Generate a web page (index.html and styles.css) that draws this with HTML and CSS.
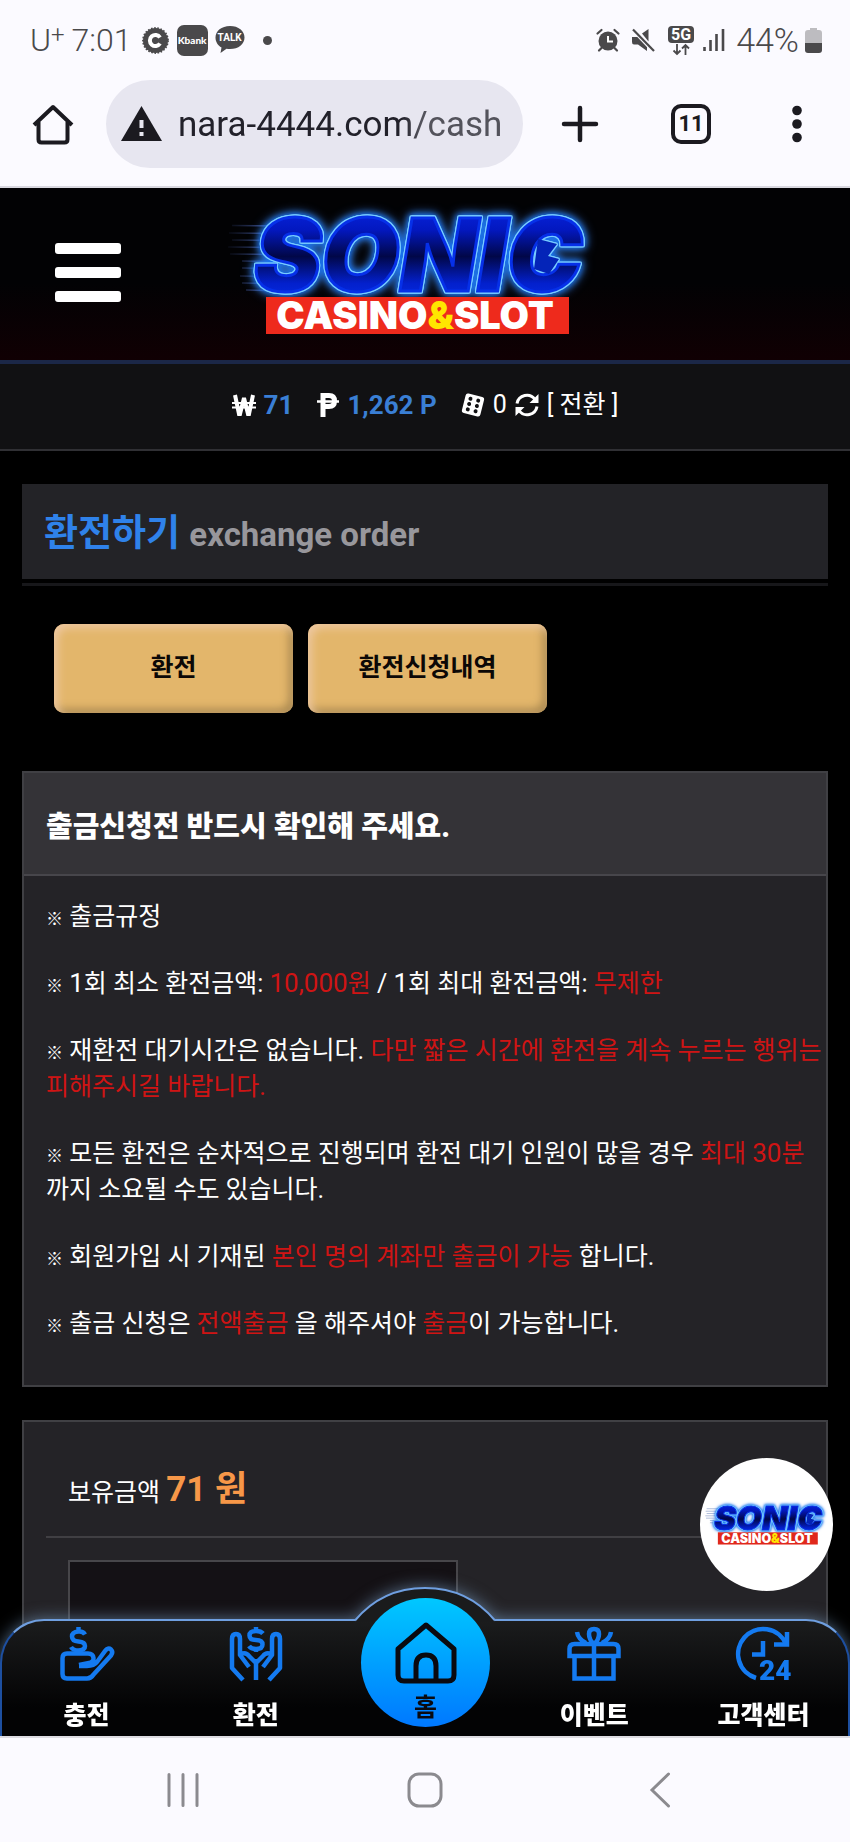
FILE: index.html
```html
<!DOCTYPE html>
<html lang="ko">
<head>
<meta charset="utf-8">
<meta name="viewport" content="width=device-width, initial-scale=1">
<title>환전하기</title>
<link rel="stylesheet" href="styles.css">
</head>
<body>
<svg class="defs" aria-hidden="true">
  <defs>
    <linearGradient id="neon" x1="0" y1="0" x2="0" y2="1">
      <stop offset="0" stop-color="#0a2cf0"/><stop offset=".3" stop-color="#0318c0"/><stop offset=".52" stop-color="#010748"/><stop offset=".74" stop-color="#0320cc"/><stop offset="1" stop-color="#0636f5"/>
    </linearGradient>
    <linearGradient id="speed" x1="0" x2="1"><stop offset="0" stop-color="#3a4c88" stop-opacity=".1"/><stop offset="1" stop-color="#5a78d8"/></linearGradient>
  </defs>
</svg>

<header class="phone-top">
  <div class="status">
    <div class="status-left">
      <span class="carrier">U<sup>+</sup></span>
      <span class="clock">7:01</span>
      <svg class="s-badge" viewBox="0 0 27 27"><circle cx="13.500" cy="13.500" r="12.500" fill="#4a494b"/><circle cx="13.500" cy="13.500" r="12.600" fill="none" stroke="#4a494b" stroke-width="1.600" stroke-dasharray="1.600 1.600"/><path d="M18 10.500A5.500 5.500 0 1 0 18 16.500" fill="none" stroke="#fff" stroke-width="4"/></svg>
      <span class="kbank">Kbank</span>
      <span class="talk"><svg viewBox="0 0 30 28"><path d="M15 0C6.500 0 .5 5 .5 11.500c0 4.500 2.500 8 6 10L5.500 27l6-4.200c1 .2 2.300.3 3.500.3 8.500 0 14.500-5 14.500-11.600S23.500 0 15 0z" fill="#4a494b"/></svg><b>TALK</b></span>
      <span class="dot"></span>
    </div>
    <div class="status-right">
      <svg class="s-alarm" viewBox="0 0 24 24"><g fill="none" stroke="#4a494b" stroke-width="2.200" stroke-linecap="round"><path d="M1.500 5.500L5.500 2M22.500 5.500L18.500 2M5.500 20l-2.500 2.500M18.500 20l2.500 2.500"/></g><circle cx="12" cy="13" r="9.500" fill="#4a494b"/><path d="M12 8v5.500h5" fill="none" stroke="#fff" stroke-width="2"/></svg>
      <svg class="s-mute" viewBox="0 0 24 24"><path d="M1 9h5l3-1.500 7 11V23l-9-6.500H3Q1 16.500 1 14zM11 5.500L17.500 1v12.500z" fill="#4a494b"/><path d="M2.500 2l20 21" stroke="#fbfaff" stroke-width="4"/><path d="M2 1.500l21 21.500" stroke="#4a494b" stroke-width="2.200"/></svg>
      <span class="net"><b>5G</b><svg viewBox="0 0 18 11"><path d="M5 0v10M1.500 6.500L5 10l3.500-3.500M13.500 11V1M10 4.500L13.500 1 17 4.500" fill="none" stroke="#4a494b" stroke-width="1.800"/></svg></span>
      <svg class="s-signal" viewBox="0 0 22 24"><path d="M1.500 19v4M7.500 12v11M13.500 6v17M20 1v22" stroke="#4a494b" stroke-width="2.600"/></svg>
      <span class="level">44%</span>
      <svg class="s-batt" viewBox="0 0 17 25"><path d="M5 0h7v2h2q3 0 3 3v11H0V5q0-3 3-3h2z" fill="#bdbcc0"/><path d="M0 15h17v7q0 3-3 3H3q-3 0-3-3z" fill="#4a494b"/></svg>
    </div>
  </div>
  <div class="browser">
    <button class="icon-btn" aria-label="홈페이지"><svg width="42" height="42" viewBox="0 0 42 42" fill="none" stroke="#1b1a20" stroke-width="4"><path d="M2 22L21 4l19 18M6.500 19v17.500q0 3 3 3h23q3 0 3-3V19" stroke-linejoin="round"/></svg></button>
    <div class="omnibox">
      <svg width="41" height="35" viewBox="0 0 41 35"><path d="M20.500 0L41 35H0z" fill="#1b1a20"/><path d="M20.500 14v8M20.500 26v4" stroke="#e7e6f0" stroke-width="4"/></svg>
      <input class="url" type="text" value="nara-4444.com/cash" aria-label="주소">
    </div>
    <button class="icon-btn" aria-label="새 탭"><svg width="36" height="36" viewBox="0 0 36 36"><path d="M18 2v32M2 18h32" stroke="#1b1a20" stroke-width="4.500" stroke-linecap="round"/></svg></button>
    <button class="tabs">11</button>
    <button class="icon-btn" aria-label="메뉴"><svg width="10" height="38" viewBox="0 0 10 38" fill="#1b1a20"><circle cx="5" cy="5.500" r="4.800"/><circle cx="5" cy="19" r="4.800"/><circle cx="5" cy="32.500" r="4.800"/></svg></button>
  </div>
</header>

<div class="site">
  <header class="brand">
    <button class="burger" aria-label="전체 메뉴"><i></i><i></i><i></i></button>
    <svg class="logo" viewBox="0 0 382 150" role="img" aria-label="SONIC CASINO&amp;SLOT">
      <path stroke="url(#speed)" stroke-width="1.500" d="M8 26.500L60 27M5 34L60 34.500M8 41L55 41.500M4 48L55 48.500M6 55L55 55.500M18 62L55 62.500M18 69L50 69.500M16 77L40 77.500M18 84L50 84.500M22 91L50 91.500"/>
      <g class="glow">
        <text class="sonic" x="30" y="92">SONIC</text>
        <path d="M314 40L333 45 324 57 335 60 325 75 310 70z" fill="#0424b8"/>
      </g>
      <rect x="42" y="98" width="303" height="37" fill="#ee2a1c"/>
      <text class="casino" x="191" y="130">CASINO<tspan fill="#ffe600">&amp;</tspan>SLOT</text>
    </svg>
  </header>

  <div class="wallet">
    <span class="coin"><svg width="24" height="22" viewBox="0 0 24 22" fill="none" stroke="#fff"><path d="M3 1l4 19h1L12 4l4 16h1L21 1" stroke-width="4"/><path d="M0 9h24M0 13.500h24" stroke-width="2"/></svg><b>71</b></span>
    <span class="coin"><svg width="22" height="24" viewBox="0 0 22 24" fill="none" stroke="#fff"><path d="M6 24V2.500h6q5.500 0 5.500 5.500t-5.500 5.500H6" stroke-width="5"/><path d="M0 8.500h22" stroke-width="2.500"/></svg><b>1,262 P</b></span>
    <span class="coin"><svg width="24" height="24" viewBox="0 0 24 24"><g transform="rotate(14 12 12)"><rect x="2.500" y="2" width="19" height="20" rx="2.500" fill="#fff"/><g fill="#111113"><circle cx="8" cy="6.500" r="2"/><circle cx="8" cy="12" r="2"/><circle cx="8" cy="17.500" r="2"/><circle cx="16" cy="6.500" r="2"/><circle cx="16" cy="12" r="2"/><circle cx="16" cy="17.500" r="2"/></g></g></svg>0
      <svg width="24" height="24" viewBox="0 0 24 24" fill="none" stroke="#fff" stroke-width="3"><path d="M2 10.500A10 10 0 0 1 20 6.500M22 13.500A10 10 0 0 1 4 17.500"/><path d="M23.500 1v9h-9zM.5 23v-9h9z" fill="#fff" stroke="none"/></svg><a class="swap" href="#">[ 전환 ]</a></span>
  </div>

  <main>
    <div class="title"><h1>환전하기 <small>exchange order</small></h1></div>
    <div class="actions"><button>환전</button><button>환전신청내역</button></div>

    <section class="panel">
      <h2>출금신청전 반드시 확인해 주세요.</h2>
      <div class="rules">
        <p><i>※</i> 출금규정</p>
        <p><i>※</i> <span class="num">1</span>회 최소 환전금액: <em><span class="num">10,000</span>원</em> / <span class="num">1</span>회 최대 환전금액: <em>무제한</em></p>
        <p><i>※</i> 재환전 대기시간은 없습니다. <em>다만 짧은 시간에 환전을 계속 누르는 행위는 피해주시길 바랍니다.</em></p>
        <p><i>※</i> 모든 환전은 순차적으로 진행되며 환전 대기 인원이 많을 경우 <em>최대 <span class="num">30</span>분</em><wbr>까지 소요될 수도 있습니다.</p>
        <p><i>※</i> 회원가입 시 기재된 <em>본인 명의 계좌만 출금이 가능</em> 합니다.</p>
        <p><i>※</i> 출금 신청은 <em>전액출금</em> 을 해주셔야 <em>출금</em>이 가능합니다.</p>
      </div>
    </section>

    <section class="panel form">
      <p class="balance">보유금액 <strong>71 원</strong></p>
      <input class="amount" type="text" aria-label="환전금액">
    </section>
  </main>

  <a class="float" href="#" aria-label="SONIC CASINO&amp;SLOT">
    <svg viewBox="0 0 382 150">
      <path stroke="#8a9cc8" stroke-width="2" d="M8 26.500h52M5 34h55M8 41h47M4 48h51M6 55h49M18 62h37M18 69h32"/>
      <g class="glow">
        <text class="sonic" x="30" y="92">SONIC</text>
        <path d="M314 40L333 45 324 57 335 60 325 75 310 70z" fill="#0424b8"/>
      </g>
      <rect x="42" y="98" width="303" height="37" fill="#e0281c"/>
      <text class="casino" x="191" y="130">CASINO<tspan fill="#ffe600">&amp;</tspan>SLOT</text>
    </svg>
  </a>

  <nav class="dock">
    <svg class="hump" viewBox="0 0 140 35"><path d="M0 35V33C18 12 42 1 70 1S122 12 140 33V35z" fill="#1a1b1c"/><path d="M0 33.500C18 12 42 1 70 1S122 12 140 33.500" fill="none" stroke="#6f9fe0" stroke-width="2"/></svg>
    <a href="#"><svg width="54" height="54" viewBox="0 0 54 54" fill="none" stroke="#147af0" stroke-width="4.500"><path d="M25 7.500Q23 4 18.500 4.500 12 5 12 9.500t6.500 5T25 19q0 4-6.500 4.500Q13 23.500 11 20M18.500 0v4M18.500 23v4"/><path d="M19 39h8q7 0 10-4l8-11q3-4 6-1.500 2.500 2.500 0 6L34 47q-3 4.500-7 4.500H7q-4.500 0-4.500-4.500V31q0-4.500 4.500-4.500h21q5 0 5.500 4.500Q34 35 29 36l-10 2" stroke-linejoin="round"/></svg>충전</a>
    <a href="#"><svg width="54" height="54" viewBox="0 0 54 54" fill="none" stroke="#147af0" stroke-width="4.500"><path d="M34 6.500Q32 4 27 4q-6.500 0-6.500 4.500t6.500 4.500 6.500 4.500-6.500 4.500q-5 0-7-3M27 0v4M27 21v4"/><path d="M14 53L3 41V12q0-5 4-5t4 5v16l9 12M27 32v21M12 27q5-2 8 2l7 7M40 53l11-12V12q0-5-4-5t-4 5v16l-9 12M42 27q-5-2-8 2l-7 7" stroke-linejoin="round"/></svg>환전</a>
    <a class="home" href="#"><svg width="62" height="62" viewBox="0 0 62 62" fill="none" stroke="#0a0a10" stroke-width="5" stroke-linejoin="round"><path d="M31 3L59 27v26q0 6-6 6H9q-6 0-6-6V27zM21 59V44q0-11 10-11t10 11v15"/></svg>홈</a>
    <a href="#"><svg width="54" height="54" viewBox="0 0 54 54" fill="none" stroke="#147af0" stroke-width="4.500"><path d="M2.500 29v-7q0-5 5-5h39q5 0 5 5v7zM7.500 29v22.500h39V29M27 17v35M10 5q1 7 9 11M44 5q-1 7-9 11M27 17q-5-4-5-10 0-5 5-5t5 5q0 6-5 10z"/></svg>이벤트</a>
    <a href="#"><span class="h24"><svg width="54" height="54" viewBox="0 0 54 54" fill="none" stroke="#147af0" stroke-width="4.500"><path d="M20 51A25 25 0 1 1 50 17"/><path d="M51 5v12.500H38M27 14v13.500H16"/></svg><b>24</b></span>고객센터</a>
  </nav>
</div>

<footer class="sysbar">
  <button aria-label="최근 앱"><svg width="34" height="34" viewBox="0 0 34 34"><path d="M3 1.500v31M17 1.500v31M31 1.500v31" stroke="#8b8a8f" stroke-width="3" stroke-linecap="round"/></svg></button>
  <button aria-label="홈"><svg width="36" height="36" viewBox="0 0 36 36"><rect x="2" y="2" width="32" height="32" rx="10" fill="none" stroke="#8b8a8f" stroke-width="3"/></svg></button>
  <button aria-label="뒤로"><svg width="22" height="36" viewBox="0 0 22 36"><path d="M19.500 2L3 18l16.500 16" fill="none" stroke="#8b8a8f" stroke-width="3" stroke-linecap="round"/></svg></button>
</footer>
</body>
</html>
```

FILE: styles.css
```css
* { box-sizing: border-box; margin: 0; padding: 0; }
body {
  height: 100vh;
  display: flex;
  flex-direction: column;
  background: #000;
  color: #fff;
  font: 25px/36px Roboto, "Noto Sans CJK KR", sans-serif;
}
button { border: 0; background: none; font: inherit; color: inherit; }
a { color: inherit; text-decoration: none; }
svg { display: block; flex: none; overflow: visible; }
.defs { position: absolute; width: 0; height: 0; }

/* phone and browser bars */
.phone-top { background: #fbfaff; border-bottom: 2px solid #d9d8e0; color: #4a494b; }
.status { display: flex; justify-content: space-between; align-items: center; height: 80px; padding: 0 28px 0 30px; font-size: 32px; font-weight: 300; }
.status-left, .status-right { display: flex; align-items: center; }
.carrier sup { font-size: 24px; line-height: 1; vertical-align: 8px; }
.clock { margin: 0 10px 0 7px; }
.s-badge { width: 27px; }
.kbank { width: 31px; margin: 0 7px 0 8px; border-radius: 7px; background: #4a494b; color: #fff; font: 900 10px/31px Lato, sans-serif; text-align: center; }
.talk { position: relative; width: 30px; }
.talk b { position: absolute; inset: 0; color: #fff; font: 700 10px/24px Roboto, sans-serif; text-align: center; }
.dot { width: 9px; height: 9px; margin-left: 18px; border-radius: 50%; background: #4a494b; }
.s-alarm { width: 24px; }
.s-mute { width: 24px; margin: 0 13px 0 11px; }
.net { display: grid; justify-items: center; gap: 1px; margin-right: 9px; }
.net b { width: 26px; border-radius: 4px; background: #4a494b; color: #fff; font: 700 16px/17px Roboto, sans-serif; text-align: center; }
.net svg { width: 18px; }
.s-signal { width: 22px; margin-right: 11px; }
.level { font-size: 34px; }
.s-batt { width: 17px; margin-left: 6px; }

.browser { display: flex; align-items: center; height: 106px; padding: 0 48px 19px 32px; }
.omnibox { flex: 1; min-width: 0; display: flex; align-items: center; gap: 16px; height: 88px; margin: 0 39px 0 32px; padding: 0 17px 0 15px; border-radius: 44px; background: #e7e6f0; }
.url { flex: 1; min-width: 0; padding-top: 2px; border: 0; background: none; color: #22212a; font: 35px/44px Roboto, sans-serif; -webkit-mask: linear-gradient(90deg, #000 68%, rgba(0,0,0,.75) 74%); mask: linear-gradient(90deg, #000 68%, rgba(0,0,0,.75) 74%); }
.tabs { flex: none; width: 40px; height: 40px; margin: 0 81px 0 73px; border: 4px solid #1b1a20; border-radius: 10px; color: #1b1a20; font: 700 22px/32px Roboto, sans-serif; }

/* site */
.site { position: relative; flex: 1; min-height: 0; overflow: hidden; }
.brand { display: flex; align-items: center; justify-content: center; position: relative; height: 176px; border-bottom: 4px solid #1b2747; background: linear-gradient(#020204 55%, #100003); }
.burger { position: absolute; left: 55px; top: 55px; display: grid; gap: 13px; width: 66px; }
.burger i { height: 11px; border-radius: 3px; background: #fff; }
.logo { width: 382px; margin-right: 20px; }
.sonic { font: italic 900 101px/72px Inter, sans-serif; fill: url(#neon); stroke: #0630e8; stroke-width: 3px; }
.glow { filter: drop-shadow(1px 0 0 #78ccff) drop-shadow(-1px 0 0 #78ccff) drop-shadow(0 1px 0 #78ccff) drop-shadow(0 -1px 0 #78ccff) drop-shadow(0 0 3px #0b6cf0) drop-shadow(0 0 5px #3d86ee); }
.casino { font: 900 38px/37px Inter, sans-serif; fill: #fff; text-anchor: middle; }

.wallet { display: flex; align-items: center; justify-content: center; gap: 24px; height: 87px; padding-bottom: 3px; border-bottom: 2px solid #303034; background: #111113; }
.coin { display: flex; align-items: center; gap: 8px; }
.wallet b { color: #3a7fd5; font-size: 26px; }

main { padding: 33px 22px 0; }
.title { padding-bottom: 4px; border-bottom: 3px solid #17171a; }
h1 { padding: 22px 22px 17px; background: #232327; color: #2f82ea; font-size: 37px; line-height: 56px; }
h1 small { color: #98979c; font-size: 33px; line-height: 1; }
.actions { display: flex; gap: 15px; margin: 38px 0 58px; padding-left: 32px; }
.actions button { width: 239px; height: 89px; padding-bottom: 2px; border-radius: 10px; background: #e3b66b; color: #0c0806; font-weight: 700; box-shadow: inset 4px 4px 8px #eec8a0, inset -4px -4px 8px #a98850; }

.panel { border: 2px solid #404044; background: #242327; }
h2 { padding: 36px 22px 29px; border-bottom: 2px solid #47464b; background: #343337; font-size: 29px; font-weight: 900; line-height: 36px; }
.rules { display: grid; gap: 31px; padding: 23px 0 43px 22px; }
.rules i { font-size: 17px; font-style: normal; font-weight: 900; line-height: 0; }
.rules em { color: #cf1414; font-style: normal; }
.num { font-size: 26px; line-height: 0; }
.form { margin-top: 33px; padding: 0 22px 200px; }
.balance { padding: 48px 22px 20px; border-bottom: 2px solid #403f43; line-height: 46px; }
.balance strong { color: #f79748; font-size: 35px; line-height: 0; }
.amount { display: block; width: 390px; height: 88px; margin: 22px 22px 0; border: 2px solid #47464a; background: #141115; color: #fff; font: inherit; }

.float { position: absolute; right: 17px; bottom: 145px; display: grid; place-items: center; width: 133px; height: 133px; border-radius: 50%; background: #fff; }
.float svg { width: 126px; }

.dock {
  position: absolute; left: 0; right: 0; bottom: 0;
  display: grid; grid-template-columns: repeat(5, 1fr);
  height: 117px;
  border: 2px solid #6f9fe0; border-color: #6f9fe0 #1d4fa0; border-bottom: 0; border-radius: 44px 44px 0 0;
  background: linear-gradient(#1b1c1d, #030304 75%);
  filter: drop-shadow(0 0 8px rgba(130, 170, 210, .6));
}
.dock a { display: flex; flex-direction: column; align-items: center; gap: 17px; padding-top: 6px; font-weight: 900; }
.hump { position: absolute; left: 50%; top: -34px; width: 140px; margin-left: -70px; }
.dock .home { position: absolute; left: 50%; top: -23px; width: 129px; height: 129px; margin-left: -64px; padding-top: 24px; gap: 6px; border-radius: 50%; background: linear-gradient(#00c8ff, #0078ff); color: #0a0a10; font-weight: 700; }
.dock a:nth-of-type(4) { grid-column: 4; }
.h24 { position: relative; }
.h24 b { position: absolute; right: -1px; bottom: -3px; color: #147af0; font: 900 28px/26px Roboto, sans-serif; }

.sysbar { display: flex; justify-content: space-between; align-items: center; height: 106px; padding: 0 179px 0 166px; border-top: 2px solid #dddce2; background: #fbfaff; }
```
